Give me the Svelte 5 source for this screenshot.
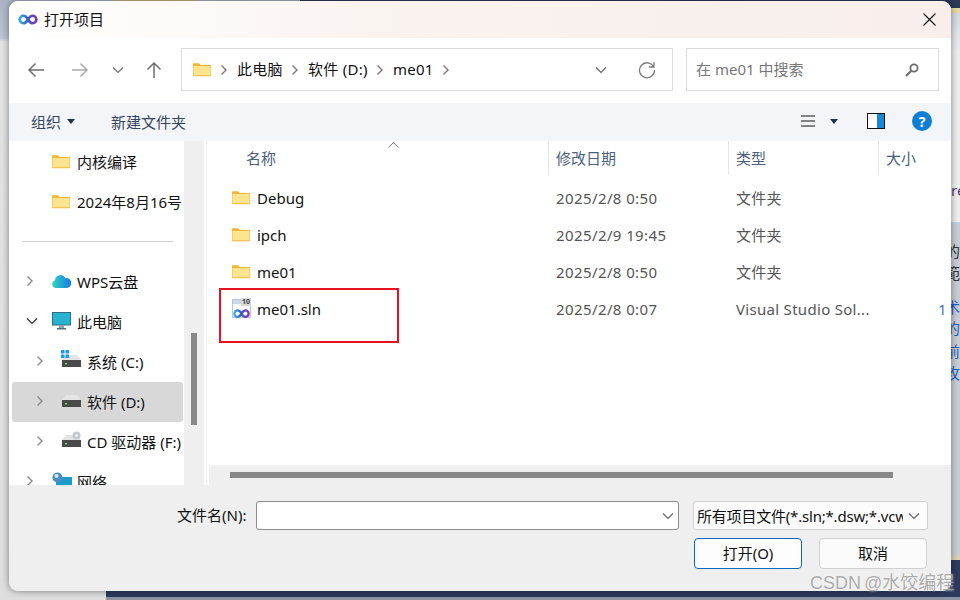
<script lang="ts">
  const navRows = [
    { label: "内核编译", icon: "folder", depth: 0 },
    { label: "2024年8月16号", icon: "folder", depth: 0 },
    { divider: true },
    { label: "WPS云盘", icon: "cloud", depth: 0, arrow: "right" },
    { label: "此电脑", icon: "pc", depth: 0, arrow: "down" },
    { label: "系统 (C:)", icon: "sys", depth: 1, arrow: "right" },
    { label: "软件 (D:)", icon: "drive", depth: 1, arrow: "right", selected: true },
    { label: "CD 驱动器 (F:)", icon: "cd", depth: 1, arrow: "right" },
    { label: "网络", icon: "net", depth: 0, arrow: "right" }
  ];

  const files = [
    { name: "Debug", date: "2025/2/8 0:50", type: "文件夹", size: "", icon: "folder" },
    { name: "ipch", date: "2025/2/9 19:45", type: "文件夹", size: "", icon: "folder" },
    { name: "me01", date: "2025/2/8 0:50", type: "文件夹", size: "", icon: "folder" },
    { name: "me01.sln", date: "2025/2/8 0:07", type: "Visual Studio Sol...", size: "1", icon: "sln" }
  ];

  const crumbs = ["此电脑", "软件 (D:)", "me01"];
</script>

{#snippet folder()}
  <svg width="18" height="15" viewBox="0 0 18.500 15">
    <path d="M0 2a1 1 0 0 1 1-1h5l2 2h-8z" fill="#f5b32b" />
    <path d="M0 3h18.500v10.500a1 1 0 0 1-1 1h-16.500a1 1 0 0 1-1-1z" fill="#f4b73c" />
    <path d="M0.500 4h17.500v9.500h-17.500z" fill="#fde48e" />
  </svg>
{/snippet}

{#snippet chevron()}
  <svg class="chev" width="8" height="12" viewBox="0 0 8 12">
    <path d="M1.500 1.500 6 6l-4.500 4.500" fill="none" stroke="currentColor" stroke-width="1.400" />
  </svg>
{/snippet}

{#snippet down(width = 12)}
  <svg width={width} height="8" viewBox="0 0 12 8">
    <path d="M1 1.500 6 6.500l5-5" fill="none" stroke="currentColor" stroke-width="1.200" />
  </svg>
{/snippet}

{#snippet drive()}
  <svg width="19" height="12" viewBox="0 0 19 12">
    <path d="M4 0h11l4 5h-19z" fill="#e4e4e4" />
    <rect x="0" y="5" width="19" height="7" fill="#4a4a4a" />
    <rect x="3" y="8" width="2" height="1.500" fill="#5fe35f" />
  </svg>
{/snippet}

{#snippet navIcon(kind)}
  {#if kind === "folder"}
    {@render folder()}
  {:else if kind === "cloud"}
    <svg width="19" height="14" viewBox="0 0 19 14">
      <defs>
        <linearGradient id="cloudfill" x1="0" y1="0" x2="1" y2="0">
          <stop offset="0" stop-color="#2fd6c0" />
          <stop offset="1" stop-color="#1677e8" />
        </linearGradient>
      </defs>
      <path d="M4 14a4 4 0 0 1-1-7.800 5.500 5.500 0 0 1 10.300-2.200 5 5 0 0 1 1.700 10z" fill="url(#cloudfill)" />
    </svg>
  {:else if kind === "pc"}
    <svg width="19" height="18" viewBox="0 0 19 18">
      <rect x="0.500" y="0.500" width="18" height="12.500" fill="#26b3cf" stroke="#2b6f86" />
      <rect x="7" y="13" width="5" height="3" fill="#8fa3ac" />
      <rect x="5" y="16" width="9" height="1.500" fill="#5d6b72" />
    </svg>
  {:else if kind === "sys"}
    <span class="stack">
      <svg class="win" width="8" height="8" viewBox="0 0 8 8">
        <path d="M0 0h3.500v3.500h-3.500zM4.500 0h3.500v3.500h-3.500zM0 4.500h3.500v3.500h-3.500zM4.500 4.500h3.500v3.500h-3.500z" fill="#1b9be8" />
      </svg>
      {@render drive()}
    </span>
  {:else if kind === "drive"}
    <span class="stack">{@render drive()}</span>
  {:else if kind === "cd"}
    <span class="stack">
      {@render drive()}
      <svg class="disc" width="9" height="9" viewBox="0 0 9 9">
        <circle cx="4.500" cy="4.500" r="4" fill="#c3cbd0" />
        <circle cx="4.500" cy="4.500" r="1.300" fill="#f4f4f4" />
      </svg>
    </span>
  {:else if kind === "net"}
    <svg width="20" height="18" viewBox="0 0 20 18">
      <rect x="4" y="5" width="16" height="12" fill="#1c9bc9" />
      <circle cx="5.500" cy="5.500" r="5" fill="#4b8ec4" />
      <circle cx="4.500" cy="4" r="2" fill="#d7ebf7" />
    </svg>
  {/if}
{/snippet}

{#snippet infinity(size = 24)}
  <svg width={size} height={size * 0.55} viewBox="0 0 24 13">
    <defs>
      <linearGradient id="loopfill" x1="0" y1="0" x2="1" y2="0">
        <stop offset="0" stop-color="#2fb0ea" />
        <stop offset="0.45" stop-color="#3d5fc4" />
        <stop offset="1" stop-color="#7a35bd" />
      </linearGradient>
    </defs>
    <path
      d="M12 6.500C10 3 8.500 2 6.500 2a4.500 4.500 0 0 0 0 9c2 0 3.500-1 5.500-4.500S15.500 2 17.500 2a4.500 4.500 0 0 1 0 9c-2 0-3.500-1-5.500-4.500z"
      fill="none"
      stroke="url(#loopfill)"
      stroke-width="3.200"
    />
  </svg>
{/snippet}

<div class="desk">
  <div class="top-image"></div>
  <div class="right-top"></div>
  <div class="side-text">
    <span class="t1">re</span>
    <span class="t2">的</span>
    <span class="t3">範</span>
    <span class="t4">术</span>
    <span class="t5">的</span>
    <span class="t6">前</span>
    <span class="t7">攻</span>
  </div>
  <div class="bottom-bar"></div>

  <div class="window">
    <header class="title">
      <span class="app-icon">{@render infinity(20)}</span>
      <span class="title-text">打开项目</span>
      <svg class="close" width="13" height="13" viewBox="0 0 13 13">
        <path d="M0.500 0.500l12 12M12.500 0.500l-12 12" stroke="#111" stroke-width="1.100" />
      </svg>
    </header>

    <div class="toolbar">
      <div class="nav-buttons">
        <svg class="b-back" width="18" height="16" viewBox="0 0 18 16">
          <path d="M17 8H2M8.500 1.500 2 8l6.500 6.500" fill="none" stroke="#6f6f6f" stroke-width="1.500" />
        </svg>
        <svg class="b-fwd" width="18" height="16" viewBox="0 0 18 16">
          <path d="M1 8h15M9.500 1.500 16 8l-6.500 6.500" fill="none" stroke="#a9a9a9" stroke-width="1.500" />
        </svg>
        <span class="b-hist">{@render down()}</span>
        <svg class="b-up" width="16" height="18" viewBox="0 0 16 18">
          <path d="M8 17V2M1.500 8.500 8 2l6.500 6.500" fill="none" stroke="#6f6f6f" stroke-width="1.500" />
        </svg>
      </div>
      <div class="address">
        <span class="addr-folder">{@render folder()}</span>
        {#each crumbs as crumb}
          <span class="crumb-chev">{@render chevron()}</span>
          <span class="crumb">{crumb}</span>
        {/each}
        <span class="crumb-chev">{@render chevron()}</span>
        <span class="addr-down">{@render down(16)}</span>
        <svg class="refresh" width="18" height="18" viewBox="0 0 18 18">
          <path d="M15.500 5.500A7.500 7.500 0 1 0 16.500 9M16 1v5h-5" fill="none" stroke="#7b7b7b" stroke-width="1.300" />
        </svg>
      </div>
      <div class="search">
        <span class="search-text">在 me01 中搜索</span>
        <svg width="14" height="14" viewBox="0 0 14 14">
          <circle cx="9" cy="5" r="3.600" fill="none" stroke="#6d6d6d" stroke-width="1.800" />
          <path d="M6.300 7.700 1 13" stroke="#6d6d6d" stroke-width="2.200" />
        </svg>
      </div>
    </div>

    <div class="commands">
      <span class="cmd-org">组织<i class="caret"></i></span>
      <span class="cmd-new">新建文件夹</span>
      <div class="cmd-right">
        <svg class="list-icon" width="14" height="12" viewBox="0 0 14 12">
          <path d="M0 1h14M0 6h14M0 11h14" stroke="#111" stroke-width="1" />
        </svg>
        <i class="caret view-caret"></i>
        <svg class="pane-icon" width="18" height="16" viewBox="0 0 18 16">
          <rect x="0.500" y="0.500" width="17" height="15" fill="#fff" stroke="#111" />
          <rect x="10" y="1" width="7" height="14" fill="#1787d8" />
        </svg>
        <span class="help">?</span>
      </div>
    </div>

    <div class="main">
      <nav class="tree">
        {#each navRows as row}
          {#if row.divider}
            <div class="divider"><hr /></div>
          {:else}
            <div class="tree-row" class:selected={row.selected} class:sub={row.depth === 1}>
              <span class="arrow">
                {#if row.arrow === "right"}
                  {@render chevron()}
                {:else if row.arrow === "down"}
                  <span class="dark">{@render down()}</span>
                {/if}
              </span>
              <span class="tree-icon">{@render navIcon(row.icon)}</span>
              <span class="tree-label">{row.label}</span>
            </div>
          {/if}
        {/each}
      </nav>
      <div class="tree-scroll"><div class="tree-thumb"></div></div>

      <section class="list">
        <div class="list-view">
          <div class="head">
            <span class="sort">
              <svg width="11" height="6" viewBox="0 0 11 6">
                <path d="M0.500 5.500 5.500 0.500l5 5" fill="none" stroke="#8a8a8a" />
              </svg>
            </span>
            <span class="h-name">名称</span>
            <span class="h-date">修改日期</span>
            <span class="h-type">类型</span>
            <span class="h-size">大小</span>
          </div>
          {#each files as file}
            <div class="file">
              <span class="f-icon">
                {#if file.icon === "folder"}
                  {@render folder()}
                {:else}
                  <span class="sln">
                    <span class="sln-badge">10</span>
                    <span class="sln-loop">{@render infinity(17)}</span>
                  </span>
                {/if}
              </span>
              <span class="f-name">{file.name}</span>
              <span class="f-date">{file.date}</span>
              <span class="f-type">{file.type}</span>
              <span class="f-size">{file.size}</span>
            </div>
          {/each}
          <div class="red-box"></div>
        </div>
        <div class="h-scroll"><div class="h-thumb"></div></div>
      </section>
    </div>

    <footer class="footer">
      <div class="line-one">
        <label for="fname">文件名(N):</label>
        <div class="name-box">
          <input id="fname" type="text" />
          <span class="muted">{@render down()}</span>
        </div>
        <div class="filter">
          <span class="filter-text">所有项目文件(*.sln;*.dsw;*.vcw</span>
          <span class="muted">{@render down()}</span>
        </div>
      </div>
      <div class="line-two">
        <button class="primary">打开(O)</button>
        <button>取消</button>
      </div>
    </footer>
  </div>

  <div class="watermark">CSDN @水饺编程</div>
</div>

<style>
  :global(body) {
    margin: 0;
    font-family: "Noto Sans", "Noto Sans CJK SC", sans-serif;
  }
  .desk {
    position: relative;
    width: 960px;
    height: 600px;
    box-sizing: border-box;
    padding: 1px 9px 9px;
    overflow: hidden;
    background: linear-gradient(#a9b4c6 0, #bcc4d0 38px, #e3e3e3 42px, #dedede 600px);
  }
  .top-image {
    position: absolute;
    left: 114px;
    top: 0;
    width: 83px;
    height: 2px;
    background: #c9b488;
  }
  .right-top {
    position: absolute;
    left: 300px;
    right: 0;
    top: 0;
    height: 222px;
    background: linear-gradient(#2b3a57 0, #2b3a57 8px, #e6d9a6 8px, #e6d9a6 13px, #d3d7e0 13px, #eeeeee 52px);
  }
  .side-text {
    position: absolute;
    left: 951px;
    right: 0;
    top: 222px;
    bottom: 0;
    background: linear-gradient(#c8ccd5 0, #c9ccd3 330px, #e3d6a5 338px, #e3d6a5 343px, #2d3b5d 343px);
    border-top: 1px solid #b7dbe6;
    font-size: 15px;
    color: #333;
  }
  .side-text span {
    position: absolute;
    left: -6px;
    line-height: 20px;
    white-space: nowrap;
  }
  .side-text .t1 { top: -43px; left: 0; color: #4a3a78; }
  .t2 { top: 18px; }
  .t3 { top: 40px; }
  .t4 { top: 74px; color: #1f62c4; }
  .t5 { top: 95px; color: #1f62c4; }
  .t6 { top: 118px; color: #1f62c4; }
  .t7 { top: 140px; color: #1f62c4; }
  .bottom-bar {
    position: absolute;
    left: 106px;
    right: 0;
    bottom: 0;
    height: 40px;
    background: linear-gradient(#2d3b5d 0, #2d3b5d 37px, #8b93a5 37px);
  }
  .window {
    position: relative;
    display: flex;
    flex-direction: column;
    width: 942px;
    height: 590px;
    border-radius: 9px;
    overflow: hidden;
    background: #efefef;
    box-shadow: 0 0 7px rgba(0, 0, 0, 0.45);
    color: #111;
    font-size: 15px;
  }
  .title {
    display: flex;
    align-items: center;
    height: 37px;
    padding: 0 15px 0 9px;
    background: linear-gradient(90deg, #fff 0, #f9f2ee 45%, #f8efec 100%);
    flex: none;
  }
  .title-text {
    margin-bottom: 3px;
  }
  .app-icon {
    display: flex;
    width: 26px;
  }
  .close {
    margin-left: auto;
  }
  .toolbar {
    display: flex;
    flex: none;
    box-sizing: border-box;
    height: 65px;
    padding-bottom: 2px;
    background: #fff;
    align-items: center;
  }
  .nav-buttons {
    display: flex;
    align-items: center;
    width: 172px;
    height: 100%;
    flex: none;
    color: #6f6f6f;
  }
  .b-back { margin-left: 18px; }
  .b-fwd { margin-left: 26px; }
  .b-hist { display: flex; margin-left: 23px; }
  .b-up { margin-left: 22px; }
  .address, .search {
    display: flex;
    align-items: center;
    box-sizing: border-box;
    height: 43px;
    border: 1.500px solid #dadada;
  }
  .address {
    width: 492px;
    padding-left: 11px;
  }
  .addr-folder {
    display: flex;
    width: 19px;
  }
  .crumb-chev {
    display: flex;
    margin: 0 9px 0 8px;
    color: #777;
  }
  .crumb, .search-text {
    white-space: nowrap;
    margin-bottom: 2px;
  }
  .crumb {
    letter-spacing: 0.300px;
  }
  .addr-down {
    display: flex;
    margin-left: 134px;
    color: #666;
  }
  .refresh { margin-left: 29px; }
  .search {
    width: 253px;
    margin-left: 13px;
    padding: 0 19px 0 9px;
    justify-content: space-between;
    color: #767676;
  }
  .commands {
    display: flex;
    flex: none;
    align-items: center;
    box-sizing: border-box;
    height: 38px;
    padding-bottom: 2px;
    background: #f3f5f8;
    color: #36465e;
  }
  .cmd-org {
    display: flex;
    align-items: center;
    margin-left: 22px;
  }
  .caret {
    width: 0;
    height: 0;
    margin-left: 6px;
    border: 4px solid transparent;
    border-top: 5px solid #1f3050;
    border-bottom: 0;
  }
  .cmd-new { margin-left: 36px; }
  .cmd-right {
    display: flex;
    align-items: center;
    margin-left: auto;
    margin-right: 19px;
  }
  .view-caret { margin-left: 15px; }
  .pane-icon { margin-left: 29px; }
  .help {
    display: flex;
    align-items: center;
    justify-content: center;
    width: 20px;
    height: 20px;
    margin-left: 27px;
    border-radius: 50%;
    background: #0f7fd6;
    color: #fff;
    font-size: 14px;
    font-weight: 700;
  }
  .main {
    display: flex;
    height: 344px;
    flex: none;
  }
  .tree {
    width: 175px;
    padding-top: 1px;
    box-sizing: border-box;
    background: #fff;
    flex: none;
    overflow: hidden;
  }
  .divider {
    box-sizing: border-box;
    height: 40px;
    display: flex;
    align-items: center;
    padding: 0 11px 2px 13px;
  }
  .divider hr {
    width: 100%;
    margin: 0;
    border: 0;
    border-top: 1px solid #d0d0d0;
  }
  .tree-row {
    display: flex;
    align-items: center;
    box-sizing: border-box;
    height: 40px;
    padding-bottom: 2px;
    margin: 0 1px 0 3px;
    border-radius: 3px;
    white-space: nowrap;
  }
  .tree-row.selected {
    background: #d8d8d8;
  }
  .arrow {
    display: flex;
    flex: none;
    box-sizing: border-box;
    width: 38px;
    padding-left: 14px;
    color: #8a8a8a;
  }
  .tree-row.sub .arrow {
    width: 48px;
    padding-left: 24px;
  }
  .dark { display: flex; color: #333; }
  .tree-icon {
    display: flex;
    align-items: center;
    width: 25px;
    margin-left: 2px;
    flex: none;
  }
  .stack {
    position: relative;
    display: flex;
  }
  .win {
    position: absolute;
    left: -1px;
    top: -5px;
  }
  .disc {
    position: absolute;
    right: 0;
    top: -4px;
  }
  .tree-scroll {
    width: 25px;
    flex: none;
    box-sizing: border-box;
    padding: 192px 0 0 7px;
    background: linear-gradient(90deg, #efefef 20px, #fff 20px, #fff 22px, #eee 22px, #eee 23px, #fff 23px);
  }
  .tree-thumb {
    width: 6px;
    height: 92px;
    background: #888;
  }
  .list {
    display: flex;
    flex-direction: column;
    flex: 1;
    min-width: 0;
    background: #fff;
  }
  .list-view {
    position: relative;
    flex: 1;
  }
  .head {
    position: relative;
    display: grid;
    grid-template-columns: 339px 180px 150px 1fr;
    height: 34px;
    margin-bottom: 4px;
    color: #4c607a;
  }
  .head span {
    display: flex;
    align-items: center;
    padding-bottom: 2px;
  }
  .h-name { padding-left: 37px; }
  .h-date, .h-type, .h-size {
    border-left: 1px solid #e5e5e5;
    padding-left: 7px;
  }
  .head .sort {
    position: absolute;
    left: 179px;
    top: 0;
    height: 8px;
    padding: 0;
  }
  .file {
    display: grid;
    grid-template-columns: 48px 299px 180px 202px 1fr;
    height: 37px;
    align-items: center;
    white-space: nowrap;
  }
  .f-icon {
    display: flex;
    padding-left: 23px;
  }
  .f-name {
    color: #111;
  }
  .f-date {
    color: #555;
    letter-spacing: 0.400px;
  }
  .f-type {
    color: #555;
    letter-spacing: 0.300px;
  }
  .f-size {
    color: #3b7ab8;
  }
  .sln {
    position: relative;
    display: block;
    width: 19px;
    height: 19px;
    box-sizing: border-box;
    border: 1px solid #b7c6da;
    background: linear-gradient(#c9d8ec 0, #c9d8ec 4px, #fdfdfd 4px);
  }
  .sln-badge {
    position: absolute;
    right: -1px;
    top: -2px;
    padding: 0 1px;
    background: #d5d5d5;
    color: #444;
    font-size: 7px;
    line-height: 8px;
    font-weight: 700;
  }
  .sln-loop {
    position: absolute;
    left: 0;
    bottom: -1px;
    display: flex;
  }
  .red-box {
    position: absolute;
    left: 10px;
    top: 147px;
    width: 180px;
    height: 55px;
    box-sizing: border-box;
    border: 2px solid #e81123;
  }
  .h-scroll {
    flex: none;
    height: 20px;
    padding: 7px 0 0 21px;
    box-sizing: border-box;
    background: #efefef;
  }
  .h-thumb {
    width: 663px;
    height: 6px;
    background: #888;
  }
  .footer {
    flex: 1;
    display: flex;
    flex-direction: column;
    background: #efefef;
  }
  .line-one {
    display: flex;
    align-items: center;
    height: 29px;
    margin-top: 16px;
  }
  label {
    margin-left: 168px;
    width: 79px;
    font-size: 15px;
    margin-bottom: 2px;
  }
  .name-box, .filter {
    display: flex;
    align-items: center;
    box-sizing: border-box;
    height: 29px;
    border-radius: 3px;
  }
  .name-box {
    width: 423px;
    background: #fff;
    border: 1px solid #8c8c8c;
    padding-right: 4px;
  }
  .name-box input {
    flex: 1;
    min-width: 0;
    border: 0;
    outline: 0;
    background: transparent;
  }
  .muted {
    display: flex;
    color: #666;
  }
  .filter {
    width: 235px;
    margin-left: 14px;
    background: #fcfcfc;
    border: 1px solid #cfcfcf;
    padding: 0 7px 0 3px;
  }
  .filter-text {
    flex: 1;
    min-width: 0;
    margin-right: 5px;
    letter-spacing: -0.200px;
    overflow: hidden;
    white-space: nowrap;
  }
  .line-two {
    display: flex;
    gap: 17px;
    margin: 8px 0 0 685px;
  }
  button {
    width: 108px;
    height: 31px;
    padding: 0 0 2px;
    border: 1px solid #d0d0d0;
    border-radius: 4px;
    background: #fbfbfb;
    color: #111;
    font: inherit;
  }
  button.primary {
    border: 1.500px solid #0067c0;
    background: #fdfdfd;
  }
  .watermark {
    position: absolute;
    left: 810px;
    top: 571px;
    font-family: "Liberation Sans", "Noto Sans CJK SC", sans-serif;
    font-size: 18px;
    word-spacing: -2px;
    line-height: 24px;
    white-space: nowrap;
    color: rgba(150, 150, 150, 0.8);
    text-shadow: 0 0 2px rgba(255, 255, 255, 0.9);
  }
</style>
